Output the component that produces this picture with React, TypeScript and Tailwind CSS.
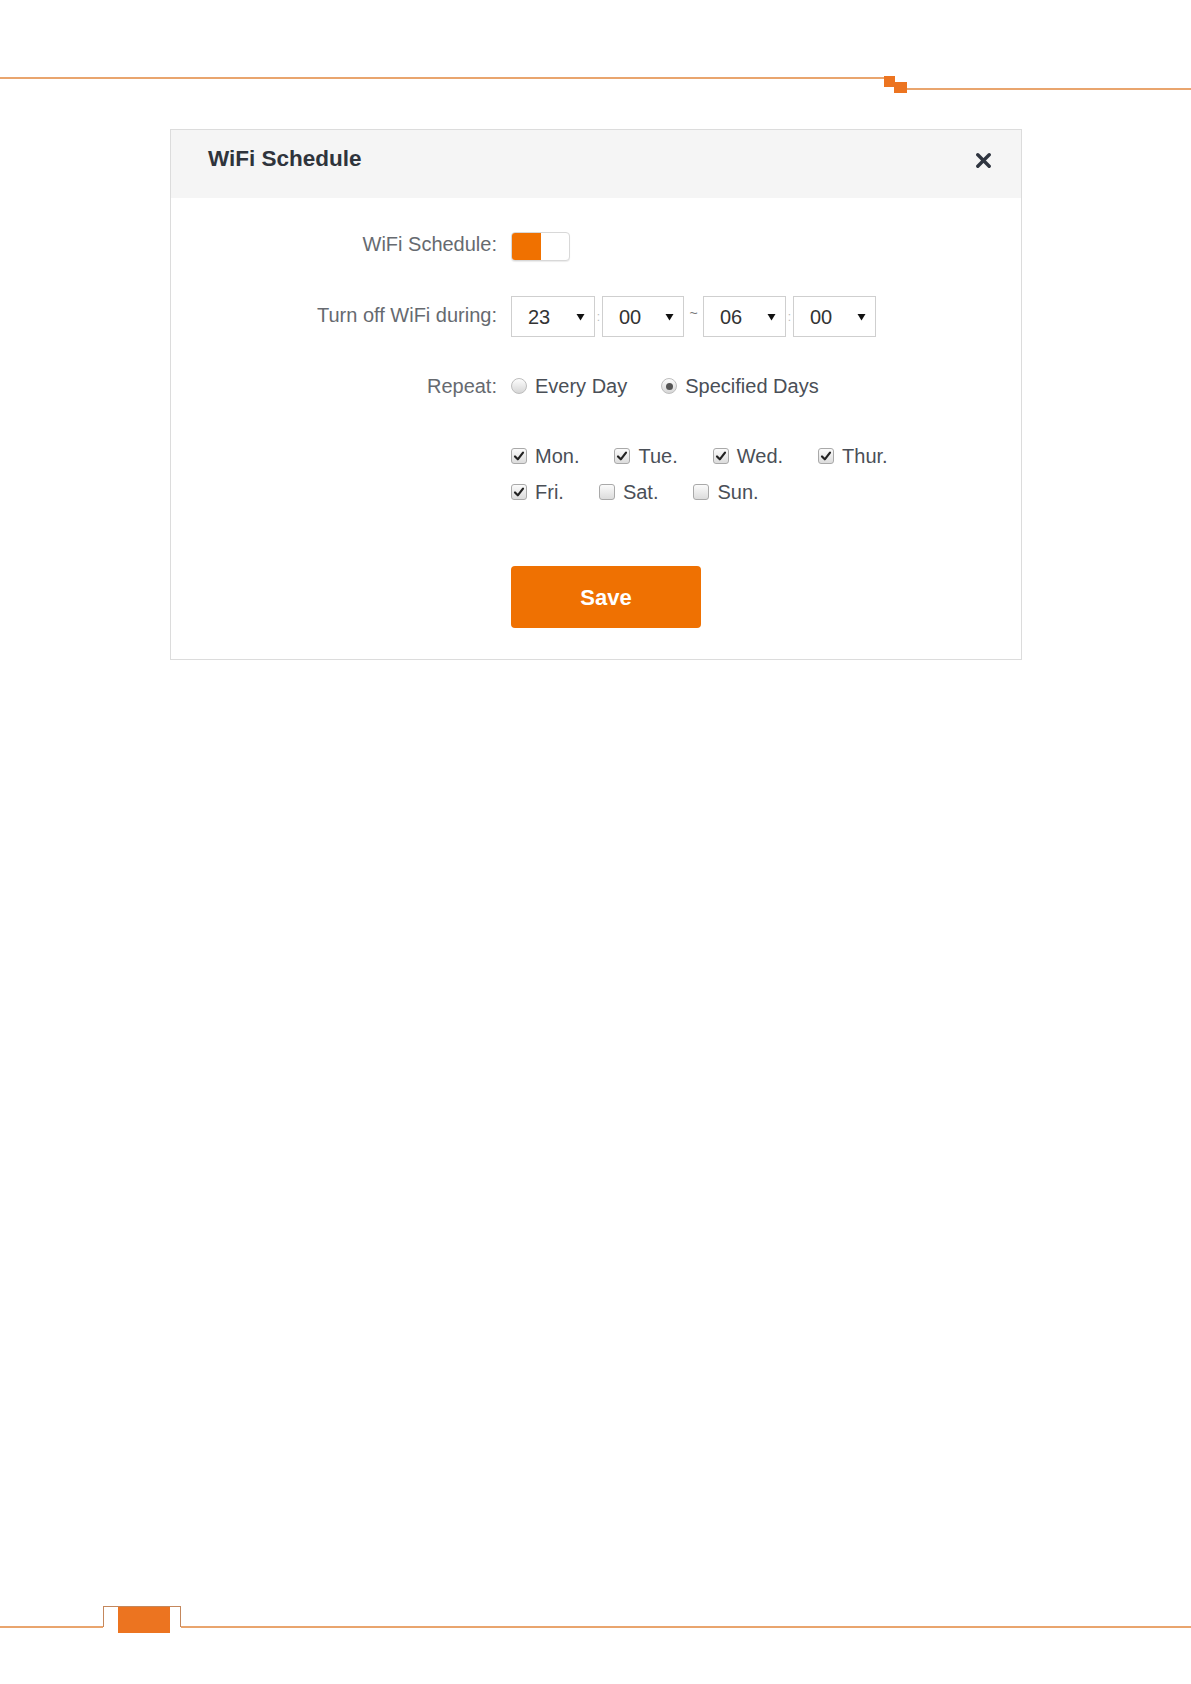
import React from "react";

const font = { fontFamily: '"Liberation Sans", Arial, sans-serif' };

function Check({ checked }: { checked: boolean }) {
  return (
    <span className="w-[16px] h-[16px] rounded-[3px] border border-[#a9a9a9] bg-gradient-to-b from-[#fbfbfb] to-[#dcdcdc] flex items-center justify-center shrink-0">
      {checked && (
        <svg width="12" height="12" viewBox="0 0 12 12">
          <path d="M2 6.5 L4.8 9.3 L10 2.6" fill="none" stroke="#222" strokeWidth="2.2" strokeLinecap="round" strokeLinejoin="round" />
        </svg>
      )}
    </span>
  );
}

function Radio({ checked }: { checked: boolean }) {
  return (
    <span className="w-[16px] h-[16px] rounded-full border border-[#bdbdbd] bg-gradient-to-b from-[#fdfdfd] to-[#d6d6d6] flex items-center justify-center shrink-0">
      {checked && <span className="w-[7px] h-[7px] rounded-full bg-[#555]" />}
    </span>
  );
}

function Sel({ value, w }: { value: string; w: string }) {
  return (
    <div className={`${w} h-[41px] border border-[#cfcfcf] bg-white flex items-center justify-between pl-[16px] pr-[9px] text-[20px] text-[#333]`}>
      <span>{value}</span>
      <svg width="9" height="8" viewBox="0 0 9 8">
        <path d="M0.5 1 L8.5 1 L4.5 7.5 Z" fill="#111" />
      </svg>
    </div>
  );
}

function Day({ label, checked }: { label: string; checked: boolean }) {
  return (
    <div className="flex items-center gap-[8px] mr-[35px]">
      <Check checked={checked} />
      <span>{label}</span>
    </div>
  );
}

export default function App() {
  return (
    <div className="w-[1191px] min-h-[1684px] bg-white flex flex-col" style={font}>
      {/* top decoration */}
      <div className="pt-[76px] flex items-start">
        <div className="w-[884px] mt-[1px] h-[1.5px] bg-[#e9a56e]" />
        <svg width="23" height="17" viewBox="0 0 23 17" className="shrink-0">
          <rect x="0" y="0" width="11" height="11" fill="#ec7420" />
          <rect x="10" y="6" width="13" height="11" fill="#ec7420" />
        </svg>
        <div className="flex-1 mt-[12px] h-[1.5px] bg-[#e9a56e]" />
      </div>

      {/* dialog */}
      <div className="ml-[170px] mt-[36px] w-[852px] border border-[#dcdcdc] bg-white">
        <div className="h-[68px] bg-[#f5f5f5] flex items-start justify-between pl-[37px] pr-[30px] pt-[14px]">
          <span className="text-[22.5px] leading-[30px] font-bold text-[#2f343c]">WiFi Schedule</span>
          <svg width="15" height="15" viewBox="0 0 15 15" className="mt-[9px]">
            <path d="M1.8 1.8 L13.2 13.2 M13.2 1.8 L1.8 13.2" stroke="#2f3540" strokeWidth="3.4" strokeLinecap="round" />
          </svg>
        </div>

        <div className="pb-[31px] text-[20px] text-[#4a4f57]">
          {/* toggle row */}
          <div className="mt-[34px] flex items-center h-[29px]">
            <div className="w-[326px] text-right text-[#666a70] pb-[5px]">WiFi Schedule:</div>
            <div className="ml-[14px] w-[59px] h-[29px] rounded-[4px] border border-[#d8d8d8] bg-white flex overflow-hidden shadow-[0_1px_1px_rgba(0,0,0,0.08)]">
              <div className="w-[29px] h-full bg-[#f07100]" />
            </div>
          </div>

          {/* time row */}
          <div className="mt-[35px] flex items-center h-[41px]">
            <div className="w-[326px] text-right text-[#666a70] pb-[4px]">Turn off WiFi during:</div>
            <div className="ml-[14px] flex items-center">
              <Sel value="23" w="w-[84px]" />
              <span className="w-[7px] text-center text-[12px] text-[#bbb]">:</span>
              <Sel value="00" w="w-[82px]" />
              <span className="w-[19px] text-center text-[14px] text-[#777] -mt-[6px]">~</span>
              <Sel value="06" w="w-[83px]" />
              <span className="w-[7px] text-center text-[12px] text-[#bbb]">:</span>
              <Sel value="00" w="w-[83px]" />
            </div>
          </div>

          {/* repeat row */}
          <div className="mt-[39px] flex items-center h-[20px]">
            <div className="w-[326px] text-right text-[#666a70]">Repeat:</div>
            <div className="ml-[14px] flex items-center">
              <div className="flex items-center gap-[8px] mr-[34px]">
                <Radio checked={false} />
                <span>Every Day</span>
              </div>
              <div className="flex items-center gap-[8px]">
                <Radio checked={true} />
                <span>Specified Days</span>
              </div>
            </div>
          </div>

          {/* days */}
          <div className="ml-[340px] mt-[50px] flex items-center h-[20px]">
            <Day label="Mon." checked />
            <Day label="Tue." checked />
            <Day label="Wed." checked />
            <Day label="Thur." checked />
          </div>
          <div className="ml-[340px] mt-[16px] flex items-center h-[20px]">
            <Day label="Fri." checked />
            <Day label="Sat." checked={false} />
            <Day label="Sun." checked={false} />
          </div>

          {/* save */}
          <div className="ml-[340px] mt-[64px]">
            <button className="w-[190px] h-[62px] rounded-[4px] bg-[#ef7102] text-white text-[22px] font-bold flex items-center justify-center">
              Save
            </button>
          </div>
        </div>
      </div>

      {/* footer decoration */}
      <div className="mt-auto mb-[51px] flex items-start h-[27px]">
        <div className="w-[103px] mt-[20px] h-[1.5px] bg-[#e9a56e]" />
        <div className="w-[78px] h-[21px] border border-b-0 border-[#c4875c] shrink-0">
          <div className="ml-[14px] w-[52px] h-[26px] bg-[#ec7420]" />
        </div>
        <div className="flex-1 mt-[20px] h-[1.5px] bg-[#e9a56e]" />
      </div>
    </div>
  );
}
